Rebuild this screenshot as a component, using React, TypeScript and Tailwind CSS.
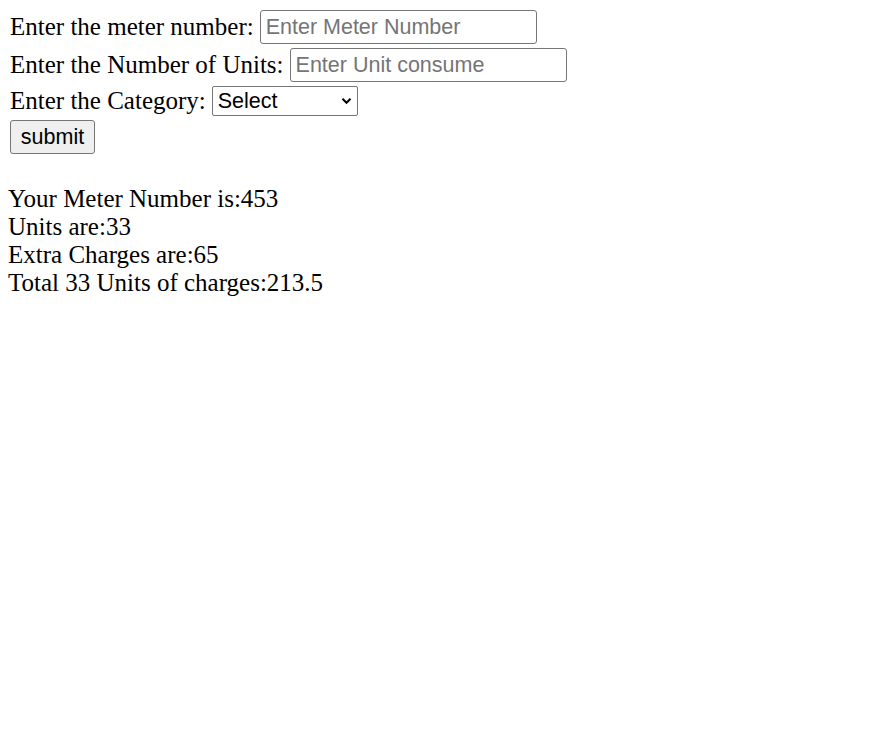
import { useState } from 'react';

export default function App() {
  const [meter, setMeter] = useState('');
  const [units, setUnits] = useState('');
  const [category, setCategory] = useState('');

  const serif = { fontFamily: '"Liberation Serif", "Times New Roman", serif' };
  const sans = '[font-family:"Liberation_Sans",Arial,sans-serif]';

  return (
    <div className="min-h-screen bg-white text-black [font-family:'Liberation_Serif','Times_New_Roman',serif]">
      <form
        className="flex flex-col items-start gap-[4px] pt-[10px] pl-[10px] text-[25px] leading-[28px]"
        onSubmit={(e) => e.preventDefault()}
      >
        <div className="flex items-center gap-[6px]" style={serif}>
          <span>Enter the meter number:</span>
          <input
            type="text"
            value={meter}
            onChange={(e) => setMeter(e.target.value)}
            placeholder="Enter Meter Number"
            className={`w-[277px] h-[34px] px-[5px] border border-[#767676] rounded-[3px] text-[21.5px] leading-[24px] placeholder:text-[#757575] outline-none ${sans}`}
          />
        </div>
        <div className="flex items-center gap-[6px]" style={serif}>
          <span>Enter the Number of Units:</span>
          <input
            type="text"
            value={units}
            onChange={(e) => setUnits(e.target.value)}
            placeholder="Enter Unit consume"
            className={`w-[277px] h-[34px] px-[5px] border border-[#767676] rounded-[3px] text-[21.5px] leading-[24px] placeholder:text-[#757575] outline-none ${sans}`}
          />
        </div>
        <div className="flex items-center gap-[6px]" style={serif}>
          <span>Enter the Category:</span>
          <div className="relative w-[146px] h-[30px]">
            <select
              value={category}
              onChange={(e) => setCategory(e.target.value)}
              className={`appearance-none w-full h-full pl-[5px] border border-[#767676] rounded-[2px] bg-white text-[21.5px] leading-[24px] outline-none ${sans}`}
            >
              <option value="">Select</option>
              <option value="home">Home</option>
              <option value="commercial">Commercial</option>
            </select>
            <svg
              className="pointer-events-none absolute right-[6px] top-[11px]"
              width="11"
              height="8"
              viewBox="0 0 11 8"
              fill="none"
            >
              <path d="M1.5 1.8 L5.5 5.8 L9.5 1.8" stroke="#000" strokeWidth="2" />
            </svg>
          </div>
        </div>
        <button
          type="submit"
          className={`w-[85px] h-[34px] border border-[#767676] rounded-[3px] bg-[#efefef] text-[21.5px] leading-[24px] text-black ${sans}`}
        >
          submit
        </button>
      </form>

      <div className="mt-[31px] pl-[8px] text-[25px] leading-[28px]" style={serif}>
        <div>Your Meter Number is:453</div>
        <div>Units are:33</div>
        <div>Extra Charges are:65</div>
        <div>Total 33 Units of charges:213.5</div>
      </div>
    </div>
  );
}
